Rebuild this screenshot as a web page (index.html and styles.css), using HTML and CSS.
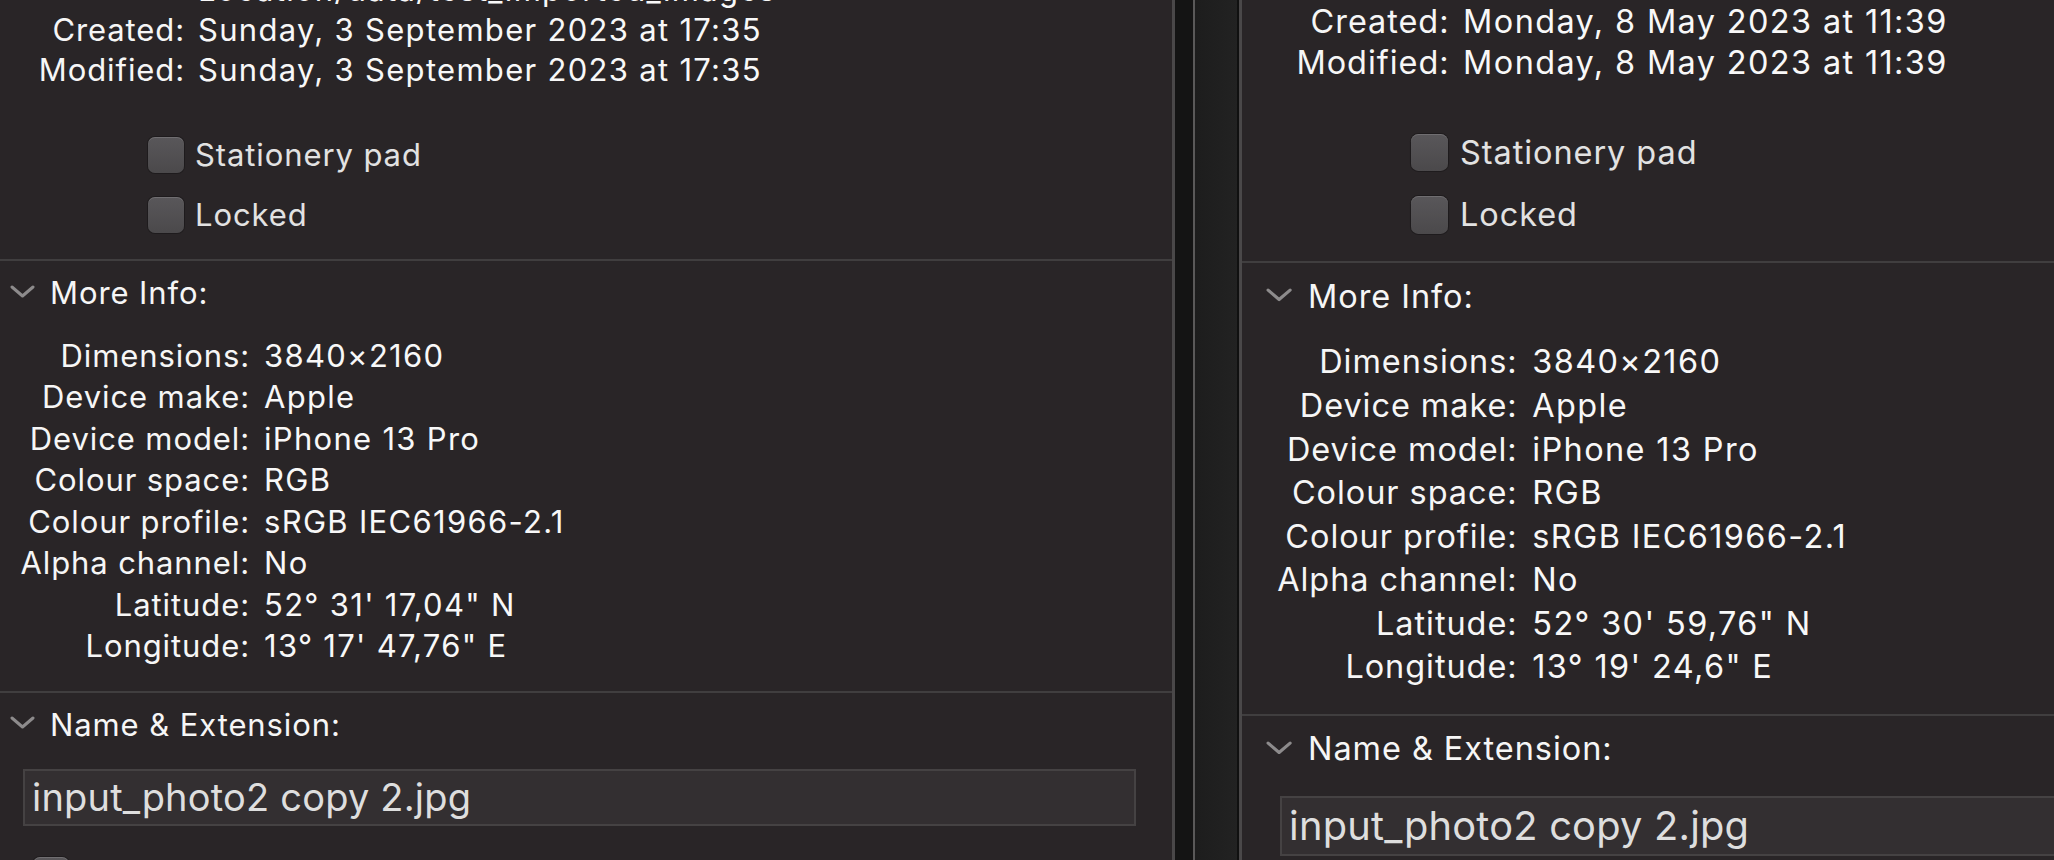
FILE: index.html
```html
<!DOCTYPE html>
<html lang="en">
<head>
<meta charset="utf-8">
<title>Get Info comparison</title>
<link rel="stylesheet" href="styles.css">
</head>
<body>
<div class="screen">
  <section class="pane pane--a">
    <div class="panel">
      <div class="general">
        <span class="k k--where">Where:</span><span class="v v--where">Macintosh HD ▸ Users ▸ shared ▸ projects ▸ <br>Location/data/test_imported_images</span>
        <span class="k">Created:</span><span class="v">Sunday, 3 September 2023 at 17:35</span>
        <span class="k">Modified:</span><span class="v">Sunday, 3 September 2023 at 17:35</span>
      </div>
      <div class="checks">
        <div class="check"><span class="box"></span><span>Stationery pad</span></div>
        <div class="check"><span class="box"></span><span>Locked</span></div>
      </div>
      <div class="sep sep--a"></div>
      <div class="disclosure disclosure--more">
        <svg class="chev" viewBox="0 0 25 13" width="25" height="13"><path d="M2 2 L12.5 11 L23 2"/></svg>
        <span>More Info:</span>
      </div>
      <div class="meta">
        <span class="k">Dimensions:</span><span class="v">3840×2160</span>
        <span class="k">Device make:</span><span class="v">Apple</span>
        <span class="k">Device model:</span><span class="v">iPhone 13 Pro</span>
        <span class="k">Colour space:</span><span class="v">RGB</span>
        <span class="k">Colour profile:</span><span class="v">sRGB IEC61966-2.1</span>
        <span class="k">Alpha channel:</span><span class="v">No</span>
        <span class="k">Latitude:</span><span class="v">52° 31' 17,04" N</span>
        <span class="k">Longitude:</span><span class="v">13° 17' 47,76" E</span>
      </div>
      <div class="sep sep--b"></div>
      <div class="disclosure disclosure--name">
        <svg class="chev" viewBox="0 0 25 13" width="25" height="13"><path d="M2 2 L12.5 11 L23 2"/></svg>
        <span>Name &amp; Extension:</span>
      </div>
      <div class="field">input_photo2 copy 2.jpg</div>
      <div class="check check--hide"><span class="box"></span><span>Hide extension</span></div>
    </div>
  </section>

  <div class="gutter">
    <div class="g g1"></div>
    <div class="g g2"></div>
    <div class="g g3"></div>
    <div class="g g4"></div>
  </div>

  <section class="pane pane--b">
    <div class="panel">
      <div class="general">
        <span class="k k--where">Where:</span><span class="v v--where">Macintosh HD ▸ Users ▸ shared ▸ projects ▸ <br>Location/data/test_imported_images</span>
        <span class="k">Created:</span><span class="v">Monday, 8 May 2023 at 11:39</span>
        <span class="k">Modified:</span><span class="v">Monday, 8 May 2023 at 11:39</span>
      </div>
      <div class="checks">
        <div class="check"><span class="box"></span><span>Stationery pad</span></div>
        <div class="check"><span class="box"></span><span>Locked</span></div>
      </div>
      <div class="sep sep--a"></div>
      <div class="disclosure disclosure--more">
        <svg class="chev" viewBox="0 0 25 13" width="25" height="13"><path d="M2 2 L12.5 11 L23 2"/></svg>
        <span>More Info:</span>
      </div>
      <div class="meta">
        <span class="k">Dimensions:</span><span class="v">3840×2160</span>
        <span class="k">Device make:</span><span class="v">Apple</span>
        <span class="k">Device model:</span><span class="v">iPhone 13 Pro</span>
        <span class="k">Colour space:</span><span class="v">RGB</span>
        <span class="k">Colour profile:</span><span class="v">sRGB IEC61966-2.1</span>
        <span class="k">Alpha channel:</span><span class="v">No</span>
        <span class="k">Latitude:</span><span class="v">52° 30' 59,76" N</span>
        <span class="k">Longitude:</span><span class="v">13° 19' 24,6" E</span>
      </div>
      <div class="sep sep--b"></div>
      <div class="disclosure disclosure--name">
        <svg class="chev" viewBox="0 0 25 13" width="25" height="13"><path d="M2 2 L12.5 11 L23 2"/></svg>
        <span>Name &amp; Extension:</span>
      </div>
      <div class="field">input_photo2 copy 2.jpg</div>
      <div class="check check--hide"><span class="box"></span><span>Hide extension</span></div>
    </div>
  </section>
</div>
</body>
</html>
```

FILE: styles.css
```css
html, body {
  margin: 0;
  padding: 0;
}

body {
  background: #292527;
  color: #f6f6f6;
  font-family: Inter, "Noto Sans", sans-serif;
  overflow: hidden;
}

.screen {
  display: flex;
  width: 2054px;
  height: 860px;
  overflow: hidden;
}

.pane {
  height: 860px;
  overflow: hidden;
  background: #292527;
}

.pane--a {
  flex: none;
  width: 1172px;
  border-right: 3px solid #4a4849;
}

.pane--b {
  flex: 1;
  min-width: 0;
  border-left: 3px solid #4a4849;
}

.gutter {
  flex: none;
  display: flex;
  height: 860px;
}

.g1 { width: 18px; background: #141414; }
.g2 { width: 2px; background: #5a5959; }
.g3 { width: 42px; background: linear-gradient(90deg, #1d1d1d, #222222); }
.g4 { width: 2px; background: #101010; }

.panel {
  --dx: 0px;
  display: flow-root;
  width: 1172px;
  font-size: 31px;
  letter-spacing: 0.9px;
  white-space: nowrap;
}

.pane--b .panel {
  --dx: 13px;
  zoom: 1.048;
  margin-top: -9.5px;
}

.general {
  margin-top: -70px;
  display: grid;
  grid-template-columns: calc(185px + var(--dx)) max-content;
  column-gap: 13px;
  grid-auto-rows: 40px;
  line-height: 40px;
}

.general .k--where,
.general .v--where {
  grid-row: span 2;
}

.k {
  text-align: right;
  color: #f6f6f6;
}

.v {
  color: #f8f8f8;
  letter-spacing: 1.3px;
}

.checks {
  margin-top: 47px;
  padding-left: calc(148px + var(--dx));
  display: flex;
  flex-direction: column;
  gap: 24px;
}

.check {
  display: flex;
  align-items: center;
  gap: 11px;
  height: 36px;
  line-height: 36px;
  color: #e2e2e2;
}

.box {
  flex: none;
  width: 36px;
  height: 36px;
  box-sizing: border-box;
  border-radius: 7px;
  background: linear-gradient(180deg, #59575a 0%, #4b494b 100%);
  box-shadow: inset 0 1px 0 rgba(255, 255, 255, 0.14), 0 0 0 1px rgba(0, 0, 0, 0.25);
}

.sep {
  height: 2px;
  background: #403e3f;
}

.sep--a { margin-top: 26px; }
.sep--b { margin-top: 24px; }

.disclosure {
  display: flex;
  align-items: center;
  gap: 15px;
  height: 41.5px;
  line-height: 41.5px;
  padding-left: calc(10px + var(--dx));
}

.disclosure--more { margin-top: 11px; }
.disclosure--name { margin-top: 10.5px; }

.chev {
  flex: none;
  margin-top: -3px;
  fill: none;
  stroke: #8d8b8c;
  stroke-width: 3;
  stroke-linecap: round;
  stroke-linejoin: round;
}

.meta {
  margin-top: 21px;
  display: grid;
  grid-template-columns: calc(250px + var(--dx)) max-content;
  column-gap: 14px;
  grid-auto-rows: 41.57px;
  line-height: 41.57px;
}

.field {
  margin-top: 24px;
  margin-left: calc(23px + var(--dx));
  width: 1113px;
  height: 57px;
  box-sizing: border-box;
  border: 2px solid #454243;
  background: #332f31;
  color: #dedede;
  font-size: 38px;
  letter-spacing: 0.2px;
  line-height: 53px;
  padding: 0 0 0 7px;
}

.check--hide {
  margin-top: 31px;
  padding-left: calc(33px + var(--dx));
}
```
